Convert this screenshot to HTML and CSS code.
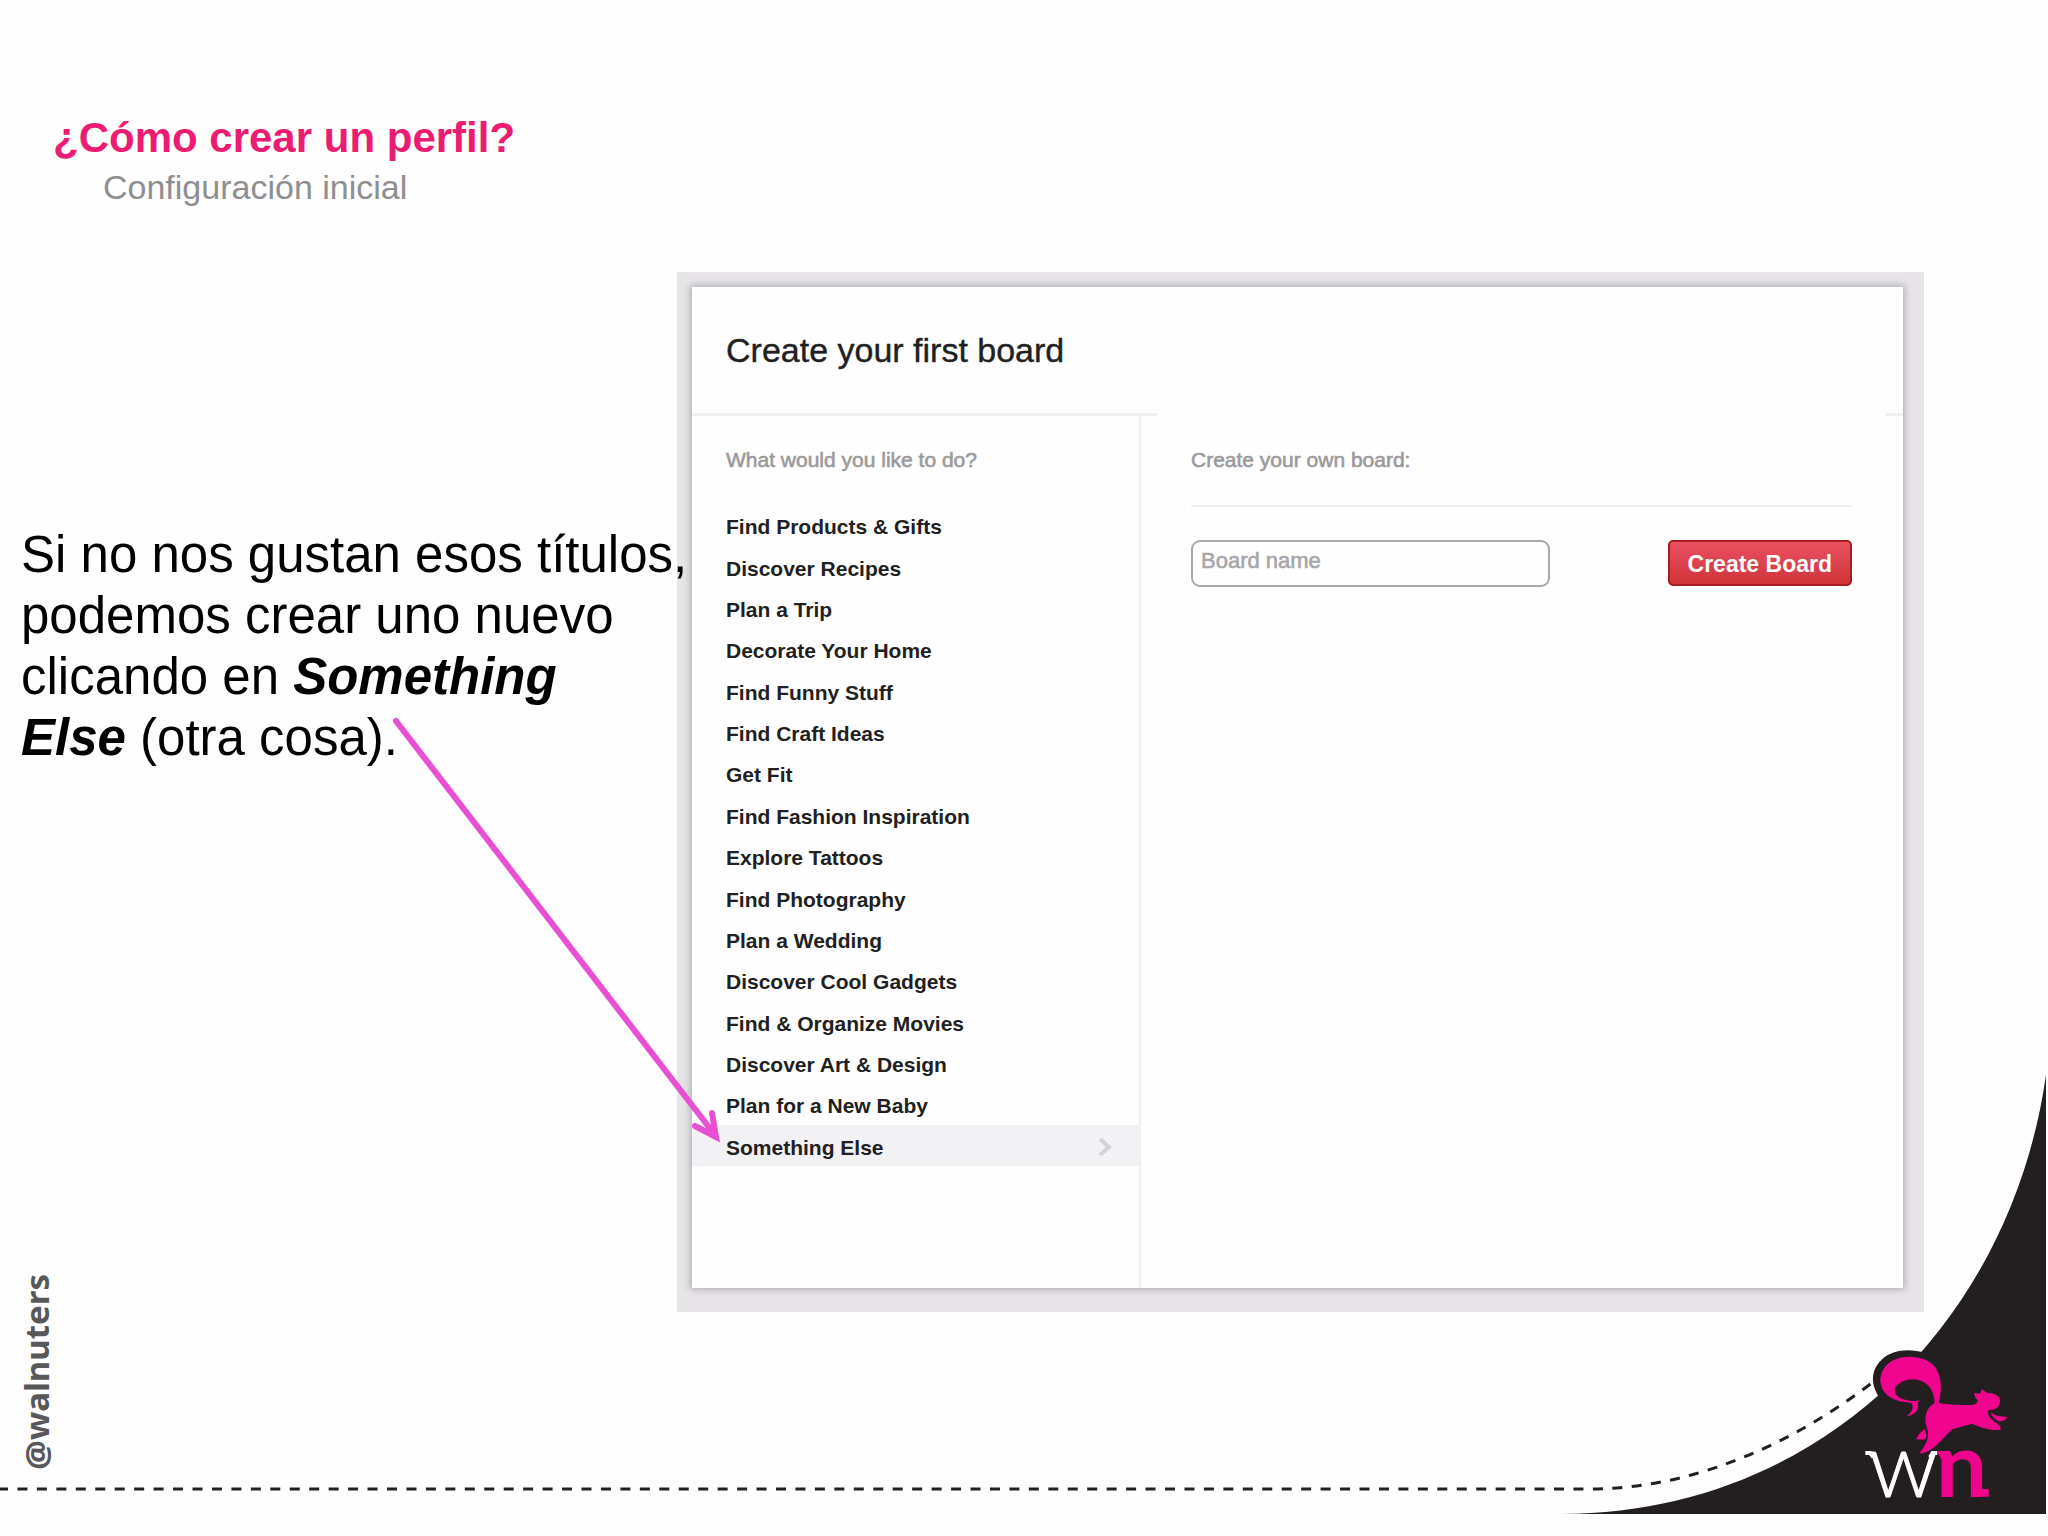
FILE: index.html
```html
<!DOCTYPE html>
<html lang="es">
<head>
<meta charset="utf-8">
<meta name="viewport" content="width=device-width, initial-scale=1">
<title>¿Cómo crear un perfil?</title>
<link rel="stylesheet" href="styles.css">
</head>
<body>
<div class="slide">
  <svg class="swoosh" viewBox="0 0 2048 486" aria-hidden="true">
    <g transform="translate(0 -1050)">
      <path d="M2046 1075C2012 1316 1825 1514 1561 1514H2046Z" fill="#231f20"/>
      <path class="stitch" d="M0 1489H1590C1690 1489 1790 1446 1873 1382"/>
    </g>
    <g transform="translate(1820 270) scale(.33333)">
      <path d="M181 236C150 195 152 150 185 119C220 86 270 86 317 99L400 180L300 330Z" fill="#231f20"/>
      <g fill="#f0048e">
        <path d="M356 248C372 190 366 112 270 110C205 110 181 150 181 182C184 226 222 243 262 247L274 249C284 262 274 278 260 288C280 288 294 272 295 259C294 251 291 248 299 241C280 246 240 242 227 222C215 196 252 178 280 178C325 180 343 215 344 248C318 264 310 292 321 325C332 350 316 378 298 400C332 402 358 366 397 328L457 311C480 322 510 333 542 329C544 316 528 308 517 300C504 288 502 276 506 270C530 271 540 260 540 240C538 226 518 217 500 218L486 207L480 221L463 218C463 230 467 235 474 242C470 253 460 255 450 255C420 255 380 254 356 248Z"/>
        <path d="M512 276C525 290 545 288 562 291C555 304 540 308 528 299C518 292 514 283 512 276Z"/>
        <path d="M315 327C318 338 322 350 316 357C306 361 298 356 288 358C296 342 304 333 315 327Z"/>
      </g>
      <path d="M136 399H150L160 412M352 399H338L330 412" fill="none" stroke="#fff" stroke-width="12"/>
      <path d="M350 393H380V418H364ZM462 507H506V530H476Z" fill="#f0048e"/>
      <text class="logo-w" x="146" y="530">w</text>
      <text class="logo-n" x="348" y="530">n</text>
    </g>
  </svg>

  <header class="heading">
    <h1>¿Cómo crear un perfil?</h1>
    <p>Configuración inicial</p>
  </header>

  <main class="content">
    <p class="note">Si no nos gustan esos títulos,<br>podemos crear uno nuevo<br>clicando en <strong>Something</strong><br><strong>Else</strong> (otra cosa).</p>

    <section class="frame">
      <div class="dialog">
        <header class="dialog-head"><h2>Create your first board</h2></header>
        <div class="columns">
          <nav class="topics" aria-labelledby="topics-label">
            <p class="label" id="topics-label">What would you like to do?</p>
            <ul>
              <li><a href="#">Find Products &amp; Gifts</a></li>
              <li><a href="#">Discover Recipes</a></li>
              <li><a href="#">Plan a Trip</a></li>
              <li><a href="#">Decorate Your Home</a></li>
              <li><a href="#">Find Funny Stuff</a></li>
              <li><a href="#">Find Craft Ideas</a></li>
              <li><a href="#">Get Fit</a></li>
              <li><a href="#">Find Fashion Inspiration</a></li>
              <li><a href="#">Explore Tattoos</a></li>
              <li><a href="#">Find Photography</a></li>
              <li><a href="#">Plan a Wedding</a></li>
              <li><a href="#">Discover Cool Gadgets</a></li>
              <li><a href="#">Find &amp; Organize Movies</a></li>
              <li><a href="#">Discover Art &amp; Design</a></li>
              <li><a href="#">Plan for a New Baby</a></li>
              <li class="active"><a href="#">Something Else
                <svg width="16" height="20" viewBox="0 0 16 20" aria-hidden="true"><path d="M3 1L12 9L3 17" fill="none" stroke="#d3d2d5" stroke-width="4"/></svg></a></li>
            </ul>
          </nav>
          <form class="own">
            <label class="label" for="board">Create your own board:</label>
            <div class="fields">
              <input id="board" type="text" placeholder="Board name">
              <button type="button">Create Board</button>
            </div>
          </form>
        </div>
      </div>
    </section>

    <svg class="arrow" width="340" height="440" viewBox="0 0 340 440" aria-hidden="true">
      <path d="M10 10L329 424M309 415L330 426L326 402" fill="none" stroke="#e84fd2" stroke-width="6" stroke-linecap="round"/>
    </svg>
  </main>

  <p class="handle">@walnuters</p>
</div>
</body>
</html>
```
FILE: styles.css
```css
* { box-sizing: border-box; }

body {
  margin: 0;
  background: #fefefe;
  font-family: "Liberation Sans", Arial, sans-serif;
}

h1, h2, p, ul { margin: 0; padding: 0; }

.slide {
  position: relative;
  min-height: 100vh;
  overflow: hidden;
}

.swoosh {
  position: absolute;
  left: 0;
  bottom: 0;
  width: 100%;
}

.stitch {
  fill: none;
  stroke: #231f20;
  stroke-width: 3;
  stroke-dasharray: 10 9.45;
  stroke-dashoffset: 2;
}

.logo-w {
  font: 300 272px Lato, sans-serif;
  fill: #fff;
  stroke: #fff;
  stroke-width: 3;
}

.logo-n {
  font: 700 272px Lato, sans-serif;
  fill: #f0048e;
}

.heading { padding: 114px 53px 65px; }

.heading h1 {
  font-size: 42px;
  line-height: 48px;
  color: #ec1c72;
}

.heading p {
  margin-top: 5px;
  padding-left: 50px;
  font-size: 34px;
  line-height: 40px;
  color: #8e8e91;
}

.content {
  position: relative;
  display: grid;
  grid-template-columns: 677fr 1247fr 124fr;
}

.note {
  z-index: 1;
  min-width: 0;
  padding: 252px 0 0 21px;
  font-size: 51px;
  line-height: 61px;
  white-space: nowrap;
  color: #000;
}

.note strong { font-style: italic; }

.frame {
  min-width: 0;
  padding: 15px 21px 24px 15px;
  background: #e7e5e8;
}

.dialog {
  background: #fefefe;
  box-shadow: 0 0 7px 2px #b4b1b5;
}

.dialog-head {
  padding: 43px 34px 46px;
  background:
    linear-gradient(#f1f0f3, #f1f0f3) left bottom / 465px 3px no-repeat,
    linear-gradient(#f1f0f3, #f1f0f3) right bottom / 18px 3px no-repeat;
}

.dialog-head h2 {
  font-size: 34px;
  font-weight: 400;
  line-height: 40px;
  color: #211f22;
  -webkit-text-stroke: 0.4px #211f22;
}

.columns {
  display: grid;
  grid-template-columns: 449fr 762fr;
}

.topics {
  padding: 30px 0 122px;
  border-right: 2px solid #f0eff2;
}

.label {
  display: block;
  font-size: 21px;
  line-height: 28px;
  color: #9b9a9b;
  -webkit-text-stroke: 0.6px #9b9a9b;
}

.topics .label { padding-left: 34px; }

.topics ul {
  display: grid;
  grid-auto-rows: 1fr;
  min-height: 662px;
  margin-top: 30px;
  list-style: none;
}

.topics li { display: flex; }

.topics a {
  display: flex;
  flex: 1;
  align-items: center;
  justify-content: space-between;
  padding: 5px 26px 0 34px;
  font-size: 21px;
  font-weight: 700;
  color: #211f22;
  text-decoration: none;
}

.topics .active { background: #f2f1f3; }

.own { padding: 30px 51px 30px 50px; }

.own .label {
  padding-bottom: 31px;
  border-bottom: 2px solid #f0eff2;
}

.fields {
  display: flex;
  justify-content: space-between;
  align-items: flex-start;
  gap: 20px;
  margin-top: 33px;
}

.fields input {
  flex: 0 1 359px;
  min-width: 0;
  height: 47px;
  padding: 0 8px 5px;
  border: 2px solid #a9a8aa;
  border-radius: 9px;
  background: #fefefe;
  font: 22px "Liberation Sans", Arial, sans-serif;
}

.fields input::placeholder {
  color: #a8a7a8;
  opacity: 1;
  -webkit-text-stroke: 0.6px #a8a7a8;
}

.fields button {
  flex: none;
  height: 46px;
  padding: 2px 18px 0;
  border: 2px solid #a81c22;
  border-radius: 5px;
  background: linear-gradient(#ea5162, #cf3438);
  font: 700 23px "Liberation Sans", Arial, sans-serif;
  color: #fff;
}

.arrow {
  position: absolute;
  z-index: 2;
  left: 386px;
  top: 439px;
}

.handle {
  position: absolute;
  left: 13px;
  bottom: 66px;
  writing-mode: vertical-rl;
  transform: rotate(180deg);
  font: 700 33px/48px "Noto Sans", sans-serif;
  color: #58585a;
}
```
